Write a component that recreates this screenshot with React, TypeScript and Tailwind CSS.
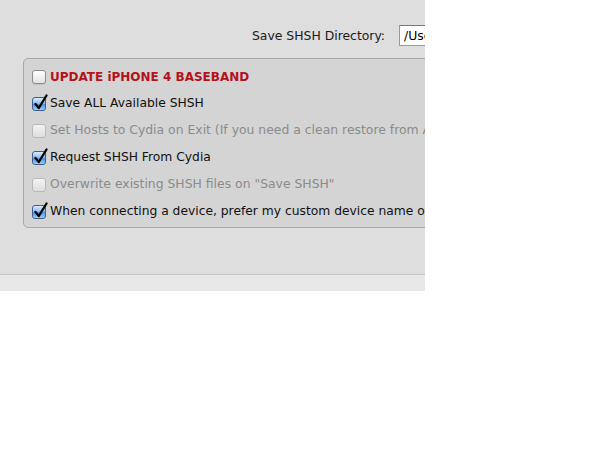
import React from "react";

type Row = { label: string; checked: boolean; disabled?: boolean; red?: boolean };

const rows: Row[] = [
  { label: "UPDATE iPHONE 4 BASEBAND", checked: false, red: true },
  { label: "Save ALL Available SHSH", checked: true },
  { label: "Set Hosts to Cydia on Exit (If you need a clean restore from Apple)", checked: false, disabled: true },
  { label: "Request SHSH From Cydia", checked: true },
  { label: 'Overwrite existing SHSH files on "Save SHSH"', checked: false, disabled: true },
  { label: "When connecting a device, prefer my custom device name over the default", checked: true },
];

function Box({ checked, disabled }: { checked: boolean; disabled?: boolean }) {
  if (checked) {
    return (
      <div className="relative w-[14px] h-[14px] shrink-0 rounded-[3px] border border-[#3d5f8f] bg-[linear-gradient(to_bottom,#dcebfb_0%,#8fbef1_45%,#4f93e6_55%,#9ccff9_100%)]">
        <svg className="absolute left-[0px] top-[-4px]" width="16" height="17" viewBox="0 0 16 17">
          <path d="M2.5 10 L5.8 14 L13.5 1.5" fill="none" stroke="#000" strokeWidth="2.3" strokeLinecap="round" strokeLinejoin="round" />
        </svg>
      </div>
    );
  }
  return (
    <div
      className={
        disabled
          ? "w-[14px] h-[14px] shrink-0 rounded-[3px] border border-[#b9b9b9] bg-[linear-gradient(to_bottom,#f3f3f3,#dedede)]"
          : "w-[14px] h-[14px] shrink-0 rounded-[3px] border border-[#8c8c8c] bg-[linear-gradient(to_bottom,#ffffff,#e2e2e2)] shadow-[0_1px_0_rgba(0,0,0,0.08)]"
      }
    />
  );
}

export default function App() {
  return (
    <div className="w-[614px] h-[460px] bg-white" style={{ fontFamily: '"DejaVu Sans", "Liberation Sans", sans-serif' }}>
      <div className="w-[425px] h-[291px] bg-[#dedede] overflow-hidden flex flex-col">
        <div className="h-[58px] shrink-0 flex items-start pt-[25px] pl-[252px] whitespace-nowrap">
          <span className="text-[12.4px] leading-[21px] text-[#1a1a1a] mr-[14px]">Save SHSH Directory:</span>
          <div className="w-[200px] h-[21px] shrink-0 bg-white border border-[#9a9a9a] border-t-[#7a7a7a] pl-[4px] text-[12.4px] leading-[19px] text-black">
            /Users/
          </div>
        </div>
        <div className="ml-[23px] w-[420px] shrink-0 h-[170px] rounded-[5px] border border-[#a9a9a9] bg-[#d4d4d4] pt-[4px] pl-[8px] flex flex-col">
          {rows.map((r, i) => (
            <div key={i} className="h-[27px] flex items-center gap-[4px] whitespace-nowrap">
              <Box checked={r.checked} disabled={r.disabled} />
              <span
                className={
                  r.red
                    ? "text-[12px] font-bold text-[#b3121b]"
                    : r.disabled
                    ? "text-[12.4px] text-[#8b8b8b]"
                    : "text-[12.3px] text-[#111111]"
                }
              >
                {r.label}
              </span>
            </div>
          ))}
        </div>
        <div className="flex-1" />
        <div className="h-[17px] shrink-0 border-t border-[#c6c6c6] bg-[#e8e8e8]" />
      </div>
    </div>
  );
}
